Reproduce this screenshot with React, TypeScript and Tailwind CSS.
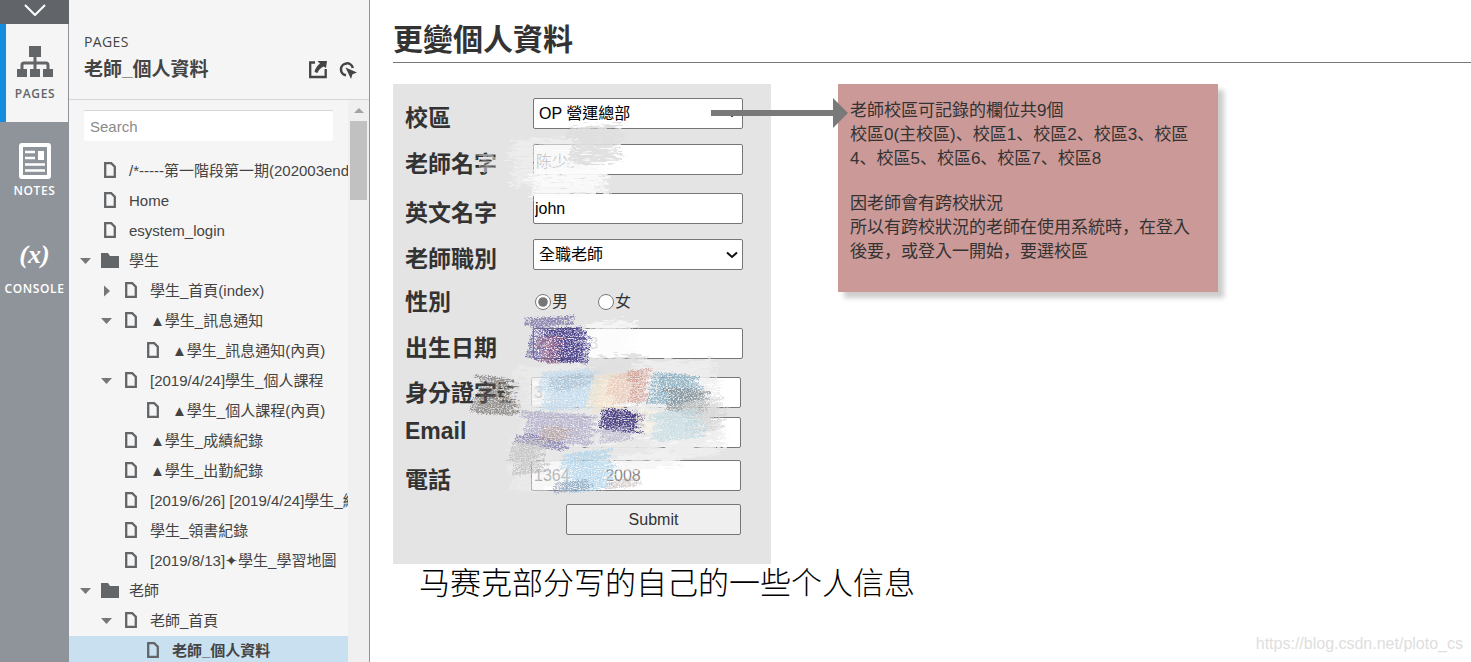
import { useId, useState, type ReactNode } from "react";

type TreeItem = {
  label: string;
  level: number;
  kind?: "page" | "folder";
  arrow?: "open" | "closed";
  selected?: boolean;
};

const TREE: TreeItem[] = [
  { label: "/*-----第一階段第一期(202003end", level: 0 },
  { label: "Home", level: 0 },
  { label: "esystem_login", level: 0 },
  { label: "學生", level: 0, kind: "folder", arrow: "open" },
  { label: "學生_首頁(index)", level: 1, arrow: "closed" },
  { label: "▲學生_訊息通知", level: 1, arrow: "open" },
  { label: "▲學生_訊息通知(內頁)", level: 2 },
  { label: "[2019/4/24]學生_個人課程", level: 1, arrow: "open" },
  { label: "▲學生_個人課程(內頁)", level: 2 },
  { label: "▲學生_成績紀錄", level: 1 },
  { label: "▲學生_出勤紀錄", level: 1 },
  { label: "[2019/6/26] [2019/4/24]學生_線", level: 1 },
  { label: "學生_領書紀錄", level: 1 },
  { label: "[2019/8/13]✦學生_學習地圖", level: 1 },
  { label: "老師", level: 0, kind: "folder", arrow: "open" },
  { label: "老師_首頁", level: 1, arrow: "open" },
  { label: "老師_個人資料", level: 2, selected: true },
];

const INDENT = ["pl-[10px]", "pl-[31px]", "pl-[53px]"];

const PageIcon = () => (
  <svg viewBox="0 0 12 16" className="h-4 w-3" aria-hidden="true">
    <path d="M1.200 1.200h6L10.800 4.800V14.800H1.200z" fill="none" stroke="#626669" strokeWidth="2.300" />
  </svg>
);

const FolderIcon = () => (
  <svg viewBox="0 0 18 15" className="h-[15px] w-[18px]" aria-hidden="true">
    <path d="M0 0h7l2 3h9v12H0z" fill="#626669" />
  </svg>
);

const Arrow = ({ open }: { open: boolean }) => (
  <svg viewBox="0 0 12 12" className="size-3" aria-hidden="true">
    <path d={open ? "M1 3h11L6.500 9z" : "M4 .5v11L10 6z"} fill="#777" />
  </svg>
);

const TreeRow = ({ item }: { item: TreeItem }) => (
  <li className={item.selected ? "bg-[#c9e0f0]" : ""}>
    <a
      href="#"
      aria-current={item.selected ? "page" : undefined}
      className={`flex h-[30px] items-center text-[15px] whitespace-nowrap text-[#444] ${INDENT[item.level]} ${item.selected ? "font-bold" : ""}`}
    >
      <span className="w-[21px] shrink-0">
        {item.arrow && <Arrow open={item.arrow === "open"} />}
      </span>
      <span className="flex w-[29px] shrink-0 pb-0.5 pl-1">
        {item.kind === "folder" ? (
          <span className="-ml-[3px]">
            <FolderIcon />
          </span>
        ) : (
          <PageIcon />
        )}
      </span>
      <span>{item.label}</span>
    </a>
  </li>
);

const RailButton = ({
  label,
  active,
  children,
}: {
  label: string;
  active?: boolean;
  children: ReactNode;
}) => (
  <button
    type="button"
    className={`flex h-[98px] w-full flex-col items-center justify-end gap-1 font-['Open_Sans',sans-serif] text-[12px] leading-4 font-semibold tracking-wider ${
      active
        ? "border-r border-l-6 border-r-[#8f949a] border-l-[#168cdf] bg-[#f5f5f5] pr-1 pb-5 text-[#626669]"
        : "pb-[21px] text-white"
    }`}
  >
    {children}
    {label}
  </button>
);

const Rail = () => (
  <nav className="flex w-[69px] shrink-0 flex-col bg-[#8f949a]">
    <button
      type="button"
      aria-label="Collapse"
      className="flex h-6 justify-center bg-[#616469] pt-1"
    >
      <svg viewBox="0 0 22 12" className="h-3 w-[22px]" aria-hidden="true">
        <path d="M1 1l10 10L21 1" fill="none" stroke="#fff" strokeWidth="2" />
      </svg>
    </button>
    <RailButton label="PAGES" active>
      <svg viewBox="0 0 36 32" className="mb-1 h-8 w-9" fill="#626669" aria-hidden="true">
        <path d="M12 0h12v11H12zM0 23h10v8H0zM13 23h10v8H13zM26 23h10v8H26z" />
        <path
          d="M18 10v14M5 24v-5q0-2 2-2h22q2 0 2 2v5"
          fill="none"
          stroke="#626669"
          strokeWidth="3"
        />
      </svg>
    </RailButton>
    <RailButton label="NOTES">
      <svg viewBox="0 0 32 36" className="h-9 w-8" aria-hidden="true">
        <rect x="2" y="2" width="28" height="32" rx="1" fill="none" stroke="#fff" strokeWidth="4" />
        <path
          d="M6 9h10M6 15h10M6 21.500h20M6 27.500h20"
          stroke="#fff"
          strokeWidth="2.500"
        />
        <path d="M19 8h6v9h-6z" fill="#fff" />
      </svg>
    </RailButton>
    <RailButton label="CONSOLE">
      <span className="mb-2 font-['Liberation_Serif',serif] text-[26px] leading-7 font-bold tracking-normal italic">
        (x)
      </span>
    </RailButton>
  </nav>
);

const PagesPanel = () => (
  <aside className="flex w-[301px] shrink-0 flex-col border-r border-[#8f949a] bg-[#f5f5f5] text-[#444]">
    <header className="flex h-[100px] shrink-0 flex-col border-b border-[#d6d6d6] pt-8 pr-3 pl-[15px]">
      <span className="font-['Open_Sans',sans-serif] text-[14px] leading-5 tracking-wide">
        PAGES
      </span>
      <div className="flex items-center">
        <h2 className="flex-1 text-[19px] leading-9 font-bold">老師_個人資料</h2>
        <button type="button" aria-label="Share">
          <svg viewBox="0 0 18 18" className="size-[18px]" aria-hidden="true">
            <path d="M6 1.500H1.200v14.500h15.500V8" fill="none" stroke="#444" strokeWidth="2.300" />
            <path d="M8.500 0H18l-1 7-2.500-1.500Q10 7.500 8.500 12l-3-1Q6.500 6 11 2.500z" fill="#444" />
          </svg>
        </button>
        <button type="button" aria-label="Highlight interactive elements" className="ml-3">
          <svg viewBox="0 0 18 18" className="size-[18px]" aria-hidden="true">
            <path
              d="M13.800 7A6 6 0 1 0 7 14.300"
              fill="none"
              stroke="#444"
              strokeWidth="2.500"
            />
            <path d="M6.500 6.500l11.500 5-4.500 1.800L12 18z" fill="#444" />
          </svg>
        </button>
      </div>
    </header>
    <div className="flex min-h-0 flex-1">
      <div className="min-w-0 flex-1 overflow-hidden">
        <input
          type="search"
          aria-label="Search"
          placeholder="Search"
          className="mt-[10px] mr-[15px] mb-[15px] ml-[15px] block h-[31px] w-[249px] rounded-xs border-t border-[#d6d6d6] bg-white px-1.5 text-[15px] placeholder:text-[#8a8a8a]"
        />
        <ul>
          {TREE.map((item) => (
            <TreeRow key={item.label} item={item} />
          ))}
        </ul>
      </div>
      <div className="flex w-[21px] flex-col items-center bg-[#f0f0f0] pt-2">
        <svg viewBox="0 0 10 5" className="h-[5px] w-[10px]" aria-hidden="true">
          <path d="M0 5l5-5 5 5z" fill="#a3a3a3" />
        </svg>
        <div className="mt-2 h-[79px] w-[17px] bg-[#c1c1c1]" />
      </div>
    </div>
  </aside>
);

const CONTROL =
  "block h-[31px] w-[210px] rounded-xs border border-[#767676] bg-white text-[16px]";

const Field = ({
  label,
  className,
  labelClassName = "w-32 pt-1",
  children,
}: {
  label: string;
  className: string;
  labelClassName?: string;
  children: (id: string) => ReactNode;
}) => {
  const id = useId();
  return (
    <div className={`flex items-start ${className}`}>
      <label
        htmlFor={id}
        className={`shrink-0 text-[23px] leading-8 font-bold whitespace-nowrap ${labelClassName}`}
      >
        {label}
      </label>
      {children(id)}
    </div>
  );
};

const SelectBox = ({ id, value }: { id: string; value: string }) => (
  <div className="grid items-center">
    <select
      id={id}
      className={`${CONTROL} col-start-1 row-start-1 appearance-none pl-[5px] text-black`}
    >
      <option>{value}</option>
    </select>
    <svg
      viewBox="0 0 12 8"
      className="pointer-events-none col-start-1 row-start-1 mr-[5px] h-2 w-3 justify-self-end"
      aria-hidden="true"
    >
      <path d="M1 1.500l5 4.500 5-4.500" fill="none" stroke="#111" strokeWidth="2" />
    </svg>
  </div>
);

type Smudge = {
  x: number;
  y: number;
  w: number;
  h: number;
  color: string;
  opacity: number;
  tilt?: number;
};

const WASHES: Smudge[] = [
  { x: 124, y: 58, w: 80, h: 46, color: "#f3f3f3", opacity: 0.6, tilt: -4 },
  { x: 144, y: 88, w: 66, h: 26, color: "#fcfcfd", opacity: 0.85, tilt: -3 },
  { x: 182, y: 46, w: 42, h: 36, color: "#dedede", opacity: 0.9, tilt: -5 },
  { x: 90, y: 72, w: 16, h: 18, color: "#e4e4e4", opacity: 0.55 },
  { x: 190, y: 242, w: 48, h: 40, color: "#fbfbfb", opacity: 0.75, tilt: -5 },
  { x: 126, y: 284, w: 128, h: 38, color: "#ececec", opacity: 0.75, tilt: -4 },
  { x: 196, y: 276, w: 50, h: 22, color: "#dfdfdf", opacity: 0.9, tilt: -5 },
  { x: 244, y: 280, w: 76, h: 46, color: "#eeeeee", opacity: 0.85, tilt: -3 },
  { x: 130, y: 322, w: 190, h: 32, color: "#e9e9e9", opacity: 0.9, tilt: 3 },
  { x: 124, y: 352, w: 180, h: 28, color: "#e8e8e8", opacity: 0.95, tilt: -5 },
  { x: 122, y: 380, w: 90, h: 28, color: "#efeff1", opacity: 0.5, tilt: -4 },
  { x: 262, y: 346, w: 66, h: 32, color: "#eeeeee", opacity: 0.85, tilt: -6 },
  { x: 222, y: 374, w: 60, h: 14, color: "#f2f2f2", opacity: 0.7, tilt: -5 },
  { x: 114, y: 296, w: 16, h: 34, color: "#e4e4e4", opacity: 0.9 },
];

const CHALK: Smudge[] = [
  { x: 138, y: 236, w: 36, h: 8, color: "#554b91", opacity: 0.6, tilt: -3 },
  { x: 142, y: 244, w: 48, h: 34, color: "#6d65a3", opacity: 0.85, tilt: 2 },
  { x: 160, y: 246, w: 28, h: 34, color: "#3f3582", opacity: 0.75, tilt: -2 },
  { x: 152, y: 254, w: 10, h: 26, color: "#b07088", opacity: 0.6 },
  { x: 90, y: 292, w: 24, h: 20, color: "#5f5a58", opacity: 0.6, tilt: 3 },
  { x: 86, y: 312, w: 32, h: 18, color: "#6c6563", opacity: 0.65, tilt: 2 },
  { x: 154, y: 290, w: 48, h: 38, color: "#b9d7ec", opacity: 0.8, tilt: -4 },
  { x: 162, y: 294, w: 30, h: 14, color: "#96afc6", opacity: 0.5, tilt: -4 },
  { x: 202, y: 294, w: 26, h: 36, color: "#f2e2c8", opacity: 0.85, tilt: -4 },
  { x: 222, y: 292, w: 26, h: 30, color: "#e9c3b0", opacity: 0.75, tilt: -5 },
  { x: 242, y: 288, w: 8, h: 34, color: "#c07f78", opacity: 0.5, tilt: -2 },
  { x: 262, y: 290, w: 40, h: 30, color: "#86adc1", opacity: 0.85, tilt: 2 },
  { x: 278, y: 304, w: 32, h: 24, color: "#848c91", opacity: 0.7, tilt: 5 },
  { x: 296, y: 318, w: 30, h: 32, color: "#cccccc", opacity: 0.6, tilt: -4 },
  { x: 136, y: 328, w: 60, h: 30, color: "#9f9bc0", opacity: 0.65, tilt: 4 },
  { x: 130, y: 350, w: 38, h: 8, color: "#7670a8", opacity: 0.7, tilt: 10 },
  { x: 154, y: 344, w: 18, h: 14, color: "#b99c8a", opacity: 0.5 },
  { x: 214, y: 326, w: 34, h: 22, color: "#3b3078", opacity: 0.9, tilt: 2 },
  { x: 210, y: 348, w: 26, h: 12, color: "#aaa5c4", opacity: 0.6, tilt: -4 },
  { x: 248, y: 326, w: 12, h: 24, color: "#fbf4e6", opacity: 0.9 },
  { x: 264, y: 330, w: 42, h: 28, color: "#bcd8e1", opacity: 0.7, tilt: -4 },
  { x: 124, y: 360, w: 24, h: 32, color: "#b0b0b0", opacity: 0.6, tilt: -4 },
  { x: 176, y: 370, w: 38, h: 40, color: "#abd2ea", opacity: 0.8, tilt: -4 },
  { x: 168, y: 400, w: 26, h: 10, color: "#7f95ad", opacity: 0.6, tilt: -3 },
  { x: 220, y: 398, w: 24, h: 8, color: "#b8a9a9", opacity: 0.5, tilt: -3 },
];

// Ragged parallel strokes that fill a smudge's box.
const strokes = ({ x, y, w, h, tilt = 0 }: Smudge) => {
  const parts: string[] = [];
  for (let i = 0; i * 2 < h; i++) {
    const left = x + ((i * 7 + x) % 15) - 9;
    const right = x + w + ((i * 11 + y) % 17) - 7;
    const top = y + i * 2;
    parts.push(`M${left} ${top}L${right} ${top + tilt}`);
  }
  return parts.join("");
};

const Strokes = ({ items }: { items: Smudge[] }) =>
  items.map((s) => (
    <path key={`${s.x}-${s.y}`} d={strokes(s)} stroke={s.color} opacity={s.opacity} />
  ));

const Smudges = () => (
  <svg
    viewBox="0 0 378 480"
    className="pointer-events-none absolute inset-0 h-full w-full"
    aria-hidden="true"
  >
    <filter id="wash" x="-10%" y="-10%" width="120%" height="120%" colorInterpolationFilters="sRGB">
      <feTurbulence type="fractalNoise" baseFrequency="0.08 0.5" numOctaves="3" seed="9" result="noise" />
      <feDisplacementMap in="SourceGraphic" in2="noise" scale="14" xChannelSelector="R" yChannelSelector="A" result="rough" />
      <feColorMatrix
        in="noise"
        type="matrix"
        values="0 0 0 0 0  0 0 0 0 0  0 0 0 0 0  4 0 0 0 -0.7"
        result="grain"
      />
      <feComposite in="rough" in2="grain" operator="in" />
    </filter>
    <filter id="chalk" x="-10%" y="-10%" width="120%" height="120%" colorInterpolationFilters="sRGB">
      <feTurbulence type="fractalNoise" baseFrequency="0.6 0.9" numOctaves="2" seed="4" result="noise" />
      <feDisplacementMap in="SourceGraphic" in2="noise" scale="6" xChannelSelector="R" yChannelSelector="G" result="rough" />
      <feColorMatrix
        in="noise"
        type="matrix"
        values="0 0 0 0 0  0 0 0 0 0  0 0 0 0 0  0 0 3 0 -0.7"
        result="grain"
      />
      <feComposite in="rough" in2="grain" operator="in" />
    </filter>
    <g filter="url(#wash)" fill="none" strokeWidth="3">
      <Strokes items={WASHES} />
    </g>
    <g filter="url(#chalk)" fill="none" strokeWidth="3">
      <Strokes items={CHALK} />
    </g>
  </svg>
);

const ProfileForm = () => {
  const [gender, setGender] = useState("男");

  return (
    <form
      className="relative h-[480px] w-[378px] shrink-0 bg-[#e4e4e4] pt-[14px] pl-3 text-[#333]"
      onSubmit={(e) => e.preventDefault()}
    >
      <Field label="校區" className="h-[46px]">
        {(id) => <SelectBox id={id} value="OP 營運總部" />}
      </Field>
      <Field label="老師名字" className="h-[49px]">
        {(id) => (
          <input
            id={id}
            defaultValue="陈少"
            className={`${CONTROL} px-0.5 font-light text-[#777]`}
          />
        )}
      </Field>
      <Field label="英文名字" className="h-[46px]">
        {(id) => (
          <input id={id} defaultValue="john" className={`${CONTROL} px-px text-black`} />
        )}
      </Field>
      <Field label="老師職別" className="h-[46px]">
        {(id) => <SelectBox id={id} value="全職老師" />}
      </Field>
      <fieldset className="mb-[9px] flex h-[34px] items-center">
        <legend className="float-left w-32 text-[23px] leading-8 font-bold">性別</legend>
        {["男", "女"].map((g) => (
          <label key={g} className="flex w-[63px] items-center gap-px pl-0.5 text-[16px]">
            <input
              type="radio"
              name="gender"
              className="size-4 accent-[#767676]"
              checked={gender === g}
              onChange={() => setGender(g)}
            />
            {g}
          </label>
        ))}
      </fieldset>
      <Field label="出生日期" className="h-[49px]">
        {(id) => (
          <input id={id} defaultValue="2       2 3" className={`${CONTROL} px-0.5 text-[#999]`} />
        )}
      </Field>
      <Field label="身分證字號" className="h-10" labelClassName="w-[126px]">
        {(id) => (
          <input id={id} defaultValue="3" className={`${CONTROL} px-0.5 text-[#999]`} />
        )}
      </Field>
      <Field label="Email" className="h-[43px]" labelClassName="w-[126px] -mt-0.5">
        {(id) => <input id={id} className={`${CONTROL} px-0.5`} />}
      </Field>
      <Field label="電話" className="h-11" labelClassName="w-[126px] pt-1">
        {(id) => (
          <input
            id={id}
            defaultValue="1364        2008"
            className={`${CONTROL} px-0.5 text-[#888]`}
          />
        )}
      </Field>
      <button
        type="submit"
        className="ml-[161px] block h-[31px] w-[175px] rounded-xs border border-[#767676] bg-[#efefef] text-[16px]"
      >
        Submit
      </button>
      <Smudges />
    </form>
  );
};

const Note = () => (
  <div className="relative h-[208px] w-[380px] shrink-0 bg-[#cb9997] px-3 pt-[15px] font-['Liberation_Sans','Noto_Sans_CJK_JP',sans-serif] text-[17px] leading-6 text-[#333] shadow-[6px_6px_5px_rgba(0,0,0,0.2)]">
    <p>老師校區可記錄的欄位共9個</p>
    <p>校區0(主校區)、校區1、校區2、校區3、校區4、校區5、校區6、校區7、校區8</p>
    <p className="mt-[21px]">因老師會有跨校狀況</p>
    <p>所以有跨校狀況的老師在使用系統時，在登入後要，或登入一開始，要選校區</p>
    <svg
      viewBox="0 0 137 30"
      className="absolute top-[14px] -left-[127px] h-[30px] w-[137px]"
      fill="#797979"
      aria-hidden="true"
    >
      <path d="M0 12h122V0l15 15-15 15V18H0z" />
    </svg>
  </div>
);

export default function App() {
  return (
    <div className="flex h-screen overflow-hidden bg-white font-['Liberation_Sans','Noto_Sans_CJK_TC',sans-serif]">
      <Rail />
      <PagesPanel />
      <main className="flex min-w-0 flex-1 flex-col overflow-hidden pl-[23px]">
        <h1 className="border-b border-[#797979] pt-[18px] text-[30px] leading-[44px] font-bold text-[#333]">
          更變個人資料
        </h1>
        <div className="mt-[21px] flex items-start gap-[67px]">
          <ProfileForm />
          <Note />
        </div>
        <p className="pl-[26px] font-['Liberation_Serif','Noto_Sans_CJK_SC',serif] text-[31px] leading-10 font-light text-black">
          马赛克部分写的自己的一些个人信息
        </p>
        <p className="mt-auto pr-2 pb-2 text-right text-[16px] leading-5 text-[#dedede]">
          https://blog.csdn.net/ploto_cs
        </p>
      </main>
    </div>
  );
}
